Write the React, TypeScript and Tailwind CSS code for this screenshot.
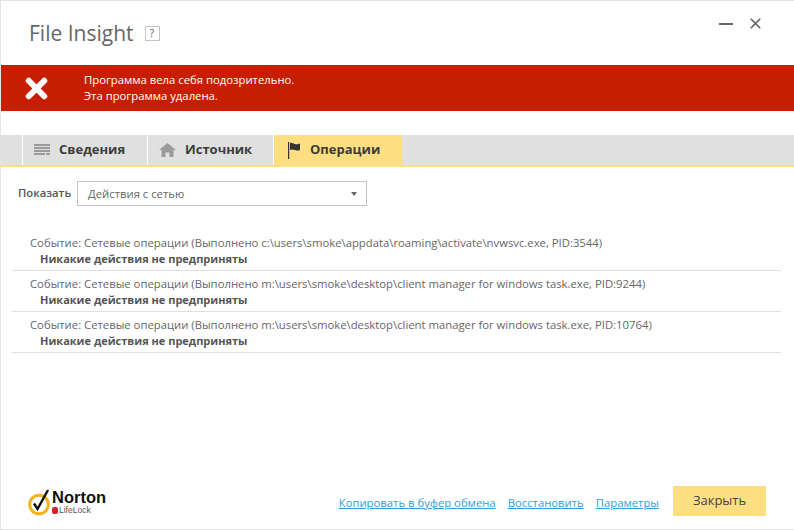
import { X } from "lucide-react";

const events = [
    "Событие: Сетевые операции (Выполнено c:\\users\\smoke\\appdata\\roaming\\activate\\nvwsvc.exe, PID:3544)",
    "Событие: Сетевые операции (Выполнено m:\\users\\smoke\\desktop\\client manager for windows task.exe, PID:9244)",
    "Событие: Сетевые операции (Выполнено m:\\users\\smoke\\desktop\\client manager for windows task.exe, PID:10764)",
];

function ListIcon() {
    return (
        <svg width="16" height="12" viewBox="0 0 16 12" fill="#9a9a9a">
            <rect x="0" y="0" width="16" height="2" />
            <rect x="0" y="3" width="16" height="2" />
            <rect x="0" y="6" width="16" height="2" />
            <rect x="0" y="9" width="11" height="2" />
            <rect x="12" y="9" width="4" height="2" />
        </svg>
    );
}

function HomeIcon() {
    return (
        <svg width="17" height="14" viewBox="0 0 17 14" fill="#9a9a9a">
            <path d="M8.5 0 L17 7 H14.5 V14 H10.5 V9.5 H6.5 V14 H2.5 V7 H0 Z" />
        </svg>
    );
}

function FlagIcon() {
    return (
        <svg width="13" height="17" viewBox="0 0 13 17">
            <rect x="0" y="0" width="1.2" height="17" fill="#333" />
            <path d="M2 1 C4 0 5 1.5 7 2 C9 2.5 10 2 12 1.5 V8 C10 9 8.5 8.5 7 8 C5 7.5 4 7 2 8 Z" fill="#333" />
        </svg>
    );
}

function NortonLogo() {
    return (
        <div className="mt-[3px] flex items-start h-[27px] font-['Liberation_Sans',sans-serif]">
            <svg width="24" height="27" viewBox="0 0 24 27">
                <circle cx="11" cy="15.5" r="9.3" fill="none" stroke="#f5b21a" strokeWidth="3" />
                <path d="M6 14.5 L9.5 20 L20 1" fill="none" stroke="#111" strokeWidth="2.4" />
            </svg>
            <div className="flex flex-col">
                <span className="h-[16px] text-[16.5px] leading-[16px] font-bold text-[#111]">Norton</span>
                <div className="mt-[1px] h-[9px] flex items-center gap-[1px]">
                    <span className="w-[6px] h-[7px] rounded-[2px] bg-[#d8232a]" />
                    <span className="text-[8.5px] leading-[9px] text-[#555]">LifeLock</span>
                </div>
            </div>
        </div>
    );
}

export default function App() {
    return (
        <div className="w-[794px] h-[530px] flex flex-col bg-white border border-[#e3e3e3] border-r-0 overflow-hidden font-['Open_Sans',sans-serif] text-[#555]">
            <div className="h-[64px] flex items-center justify-between pl-[28px] pr-[30px]">
                <div className="flex items-center gap-[11px]">
                    <span className="text-[21px] leading-none text-[#666]">File Insight</span>
                    <span className="w-[15px] h-[15px] border border-[#c4c4c4] text-[10px] leading-[13px] text-center text-[#555]">?</span>
                </div>
                <div className="mb-[19px] flex items-center gap-[14px] text-[#666]">
                    <span className="w-[14px] h-[2px] bg-[#666]" />
                    <X size={17} strokeWidth={2.4} />
                </div>
            </div>

            <div className="h-[46px] bg-[#c81e00] flex items-center pl-[20px] text-white">
                <X size={31} strokeWidth={4.6} strokeLinecap="round" className="mr-[32px]" />
                <div className="text-[11.3px] leading-[16px]">
                    <div>Программа вела себя подозрительно.</div>
                    <div>Эта программа удалена.</div>
                </div>
            </div>

            <div className="mt-[24px] h-[32px] flex bg-[#e0e0e0] border-b-2 border-[#fddf82]">
                <div className="w-[22px] border-r border-white" />
                <div className="w-[125px] border-r border-white flex items-center pl-[11px] gap-[9px]">
                    <ListIcon />
                    <span className="text-[13px] font-bold text-[#3c3c3c]">Сведения</span>
                </div>
                <div className="w-[126px] border-r border-white flex items-center pl-[11px] gap-[9px]">
                    <HomeIcon />
                    <span className="text-[13px] font-bold text-[#3c3c3c]">Источник</span>
                </div>
                <div className="w-[128px] bg-[#fddf82] flex items-center pl-[14px] gap-[9px]">
                    <FlagIcon />
                    <span className="text-[13px] font-bold text-[#3c3c3c]">Операции</span>
                </div>
            </div>

            <div className="mt-[14px] pl-[17px] flex items-center gap-[4px]">
                <span className="w-[55px] text-[11.3px] font-semibold text-[#555]">Показать</span>
                <div className="w-[290px] h-[25px] border border-[#c4c4c4] flex items-center justify-between pl-[10px] pr-[9px]">
                    <span className="text-[11.3px] leading-[23px] text-[#666]">Действия с сетью</span>
                    <span className="w-0 h-0 border-x-[3.5px] border-x-transparent border-t-[4px] border-t-[#666]" />
                </div>
            </div>

            <div className="mt-[24px] ml-[11px] mr-[13px] flex flex-col">
                {events.map((event) => (
                    <div key={event} className="h-[41px] pt-[5px] border-b border-[#e0e0e0] pl-[18px]">
                        <div className="text-[11.3px] leading-[15px] whitespace-nowrap text-[#666]">{event}</div>
                        <div className="pl-[10px] text-[11px] leading-[17px] font-bold text-[#555]">Никакие действия не предприняты</div>
                    </div>
                ))}
            </div>

            <div className="mt-auto mb-[13px] flex items-center justify-between pl-[27px] pr-[28px]">
                <NortonLogo />
                <div className="flex items-center">
                    <a className="pt-[4px] text-[11.3px] text-[#2c9fdc] underline mr-[12px]">Копировать в буфер обмена</a>
                    <a className="pt-[4px] text-[11.3px] text-[#2c9fdc] underline mr-[12px]">Восстановить</a>
                    <a className="pt-[4px] text-[11.3px] text-[#2c9fdc] underline mr-[14px]">Параметры</a>
                    <button className="w-[93px] h-[30px] bg-[#fddf82] text-[13px] text-[#444]">Закрыть</button>
                </div>
            </div>
        </div>
    );
}
